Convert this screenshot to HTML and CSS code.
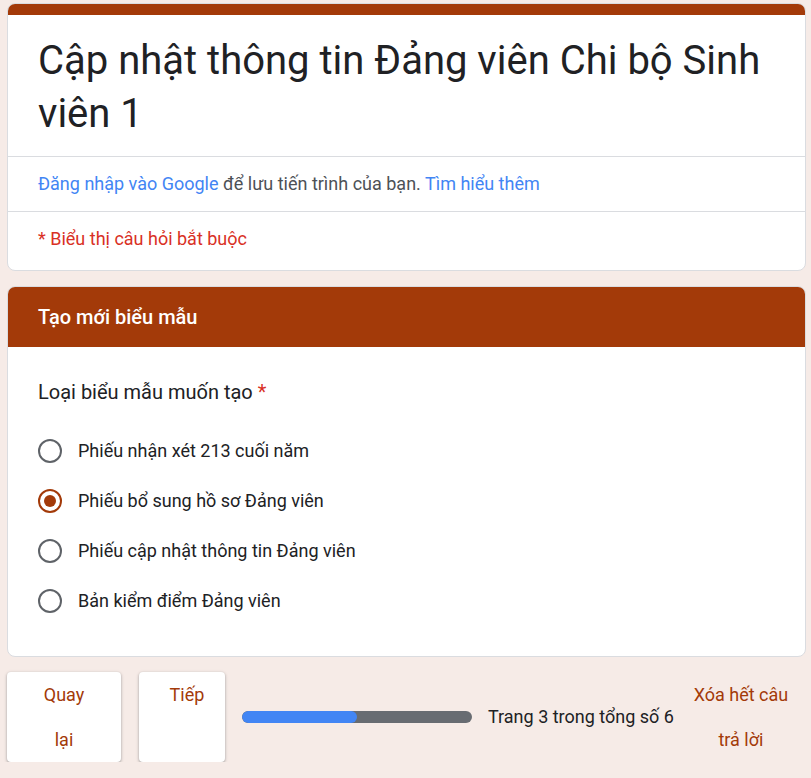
FILE: index.html
```html
<!DOCTYPE html>
<html lang="vi">
<head>
<meta charset="utf-8">
<link rel="stylesheet" href="styles.css">
</head>
<body>
<div class="page">
  <div class="card head-card">
    <div class="head-band"></div>
    <h1 class="title">Cập nhật thông tin Đảng viên Chi bộ Sinh viên 1</h1>
    <div class="signin"><a class="link">Đăng nhập vào Google</a> để lưu tiến trình của bạn. <a class="link">Tìm hiểu thêm</a></div>
    <div class="required">* Biểu thị câu hỏi bắt buộc</div>
  </div>

  <div class="card section-card">
    <div class="section-head">Tạo mới biểu mẫu</div>
    <div class="question">
      <div class="q-title">Loại biểu mẫu muốn tạo <span class="star">*</span></div>
      <div class="options">
        <div class="option"><span class="radio"></span><span>Phiếu nhận xét 213 cuối năm</span></div>
        <div class="option"><span class="radio checked"></span><span>Phiếu bổ sung hồ sơ Đảng viên</span></div>
        <div class="option"><span class="radio"></span><span>Phiếu cập nhật thông tin Đảng viên</span></div>
        <div class="option"><span class="radio"></span><span>Bản kiểm điểm Đảng viên</span></div>
      </div>
    </div>
  </div>

  <div class="footer">
    <div class="btn btn-back">Quay lại</div>
    <div class="btn btn-next">Tiếp</div>
    <div class="progress"><div class="progress-fill" style="width:50%"></div></div>
    <div class="page-count">Trang 3 trong tổng số 6</div>
    <div class="clear">Xóa hết câu trả lời</div>
  </div>
</div>
</body>
</html>
```

FILE: styles.css
```css
* { box-sizing: border-box; }
html, body { margin: 0; padding: 0; }
body {
  background: #f6ebe7;
  font-family: Roboto, "Noto Sans", Arial, sans-serif;
  color: #202124;
}
.page {
  width: 799px;
  margin: 3px 0 0 7px;
  display: flex;
  flex-direction: column;
}
.card {
  background: #fff;
  border: 1px solid #dadce0;
  border-radius: 8px;
  overflow: hidden;
}
.head-band {
  height: 11px;
  background: #a33a09;
}
.title {
  margin: 0;
  padding: 19px 30px 16px 30px;
  font-size: 40px;
  font-weight: 400;
  line-height: 53px;
  color: #202124;
  border-bottom: 1px solid #dadce0;
}
.signin {
  padding: 16px 30px 16px;
  font-size: 18px;
  line-height: 22px;
  color: #4d5156;
  border-bottom: 1px solid #dadce0;
}
.link { color: #4285f4; }
.required {
  padding: 16px 30px 20px;
  font-size: 18px;
  line-height: 22px;
  color: #d93025;
}
.section-card {
  margin-top: 15px;
}
.section-head {
  background: #a33a09;
  color: #fff;
  font-size: 20px;
  font-weight: 500;
  height: 60px;
  line-height: 60px;
  padding: 0 30px;
}
.question {
  padding: 32px 30px 43px;
}
.q-title {
  font-size: 20px;
  line-height: 26px;
}
.star { color: #d93025; }
.options {
  margin-top: 34px;
  display: flex;
  flex-direction: column;
  gap: 26px;
}
.option {
  display: flex;
  align-items: center;
  gap: 16px;
  font-size: 18px;
  line-height: 24px;
}
.radio {
  width: 24px;
  height: 24px;
  border: 2px solid #5f6368;
  border-radius: 50%;
  flex: none;
  display: flex;
  align-items: center;
  justify-content: center;
}
.radio.checked { border-color: #a33a09; }
.radio.checked::after {
  content: "";
  width: 12px;
  height: 12px;
  border-radius: 50%;
  background: #a33a09;
}
.footer {
  margin-top: 15px;
  display: flex;
  align-items: center;
}
.btn {
  background: #fff;
  border-radius: 4px;
  box-shadow: 0 1px 2px rgba(60,64,67,0.3), 0 1px 3px 1px rgba(60,64,67,0.15);
  color: #a33a09;
  font-size: 18px;
  font-weight: 400;
  line-height: 45px;
  text-align: center;
  height: 90px;
  align-self: flex-start;
}
.btn-back { width: 114px; padding: 0 32px; }
.btn-next { width: 86px; margin-left: 18px; padding: 0 20px 0 30px; }
.progress {
  margin-left: 17px;
  width: 230px;
  height: 12px;
  border-radius: 6px;
  background: #686c72;
  overflow: hidden;
}
.progress-fill {
  height: 100%;
  background: #4285f4;
  border-radius: 6px;
}
.page-count {
  margin-left: 16px;
  font-size: 18px;
  line-height: 24px;
}
.clear {
  margin-left: 14px;
  width: 106px;
  text-align: center;
  color: #a33a09;
  font-size: 18px;
  font-weight: 400;
  line-height: 45px;
  align-self: flex-start;
}
```
